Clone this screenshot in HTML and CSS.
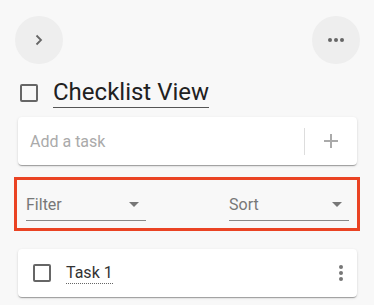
FILE: index.html
```html
<!DOCTYPE html>
<html lang="en">
<head>
<meta charset="utf-8">
<title>Checklist View</title>
<link rel="stylesheet" href="styles.css">
</head>
<body>
<div class="page">
  <div class="topbar">
    <button class="circle-btn" aria-label="Expand">
      <svg width="10" height="12" viewBox="0 0 10 12"><path d="M2.5 1.5 L7 6 L2.5 10.5" fill="none" stroke="#666" stroke-width="1.8"/></svg>
    </button>
    <button class="circle-btn" aria-label="More">
      <svg width="18" height="6" viewBox="0 0 18 6"><circle cx="3" cy="3" r="2" fill="#666"/><circle cx="9" cy="3" r="2" fill="#666"/><circle cx="15" cy="3" r="2" fill="#666"/></svg>
    </button>
  </div>

  <div class="title-row">
    <span class="checkbox"></span>
    <span class="title">Checklist View</span>
  </div>

  <div class="card add-card">
    <div class="add-input">Add a task</div>
    <div class="add-divider"></div>
    <div class="add-btn">
      <svg width="16" height="16" viewBox="0 0 16 16"><path d="M8 1 V15 M1 8 H15" stroke="#aaa" stroke-width="2" fill="none"/></svg>
    </div>
  </div>

  <div class="filter-box">
    <div class="select">
      <span>Filter</span>
      <span class="arrow"></span>
    </div>
    <div class="select">
      <span>Sort</span>
      <span class="arrow"></span>
    </div>
  </div>

  <div class="card task-card">
    <span class="checkbox"></span>
    <span class="task-text">Task 1</span>
    <span class="kebab">
      <svg width="4" height="16" viewBox="0 0 4 16"><circle cx="2" cy="2" r="2" fill="#777"/><circle cx="2" cy="8" r="2" fill="#777"/><circle cx="2" cy="14" r="2" fill="#777"/></svg>
    </span>
  </div>
</div>
</body>
</html>
```

FILE: styles.css
```css
html, body {
  margin: 0;
  padding: 0;
  background: #f8f8f8;
  font-family: Roboto, "Liberation Sans", sans-serif;
}

.page {
  padding: 16px 17px 8px 18px;
}

.topbar {
  display: flex;
  justify-content: space-between;
  margin: 0 -3px;
}

.circle-btn {
  width: 48px;
  height: 48px;
  border-radius: 50%;
  background: #eeeeee;
  border: none;
  padding: 0;
  display: flex;
  align-items: center;
  justify-content: center;
}

.title-row {
  display: flex;
  align-items: center;
  gap: 15px;
  margin-top: 14px;
  padding-left: 2px;
}

.checkbox {
  box-sizing: border-box;
  width: 18px;
  height: 18px;
  border: 2px solid #666;
  border-radius: 2px;
  flex: none;
}

.title {
  font-size: 24px;
  line-height: 28px;
  color: #212121;
  padding-bottom: 1px;
  border-bottom: 1px solid #555;
}

.card {
  background: #fff;
  border-radius: 4px;
  box-shadow: 0 2px 1px -1px rgba(0,0,0,0.2), 0 1px 1px 0 rgba(0,0,0,0.14), 0 1px 3px 0 rgba(0,0,0,0.12);
}

.add-card {
  margin-top: 9px;
  height: 48px;
  display: flex;
  align-items: center;
}

.add-input {
  flex: 1;
  padding-left: 12px;
  font-size: 16px;
  color: #aaa;
}

.add-divider {
  width: 1px;
  height: 27px;
  background: #dddddd;
}

.add-btn {
  width: 52px;
  display: flex;
  align-items: center;
  justify-content: center;
}

.filter-box {
  margin: 12px -3px 0 -4px;
  border: 3px solid #ea4323;
  padding: 0 8px 7px 9px;
  display: flex;
  justify-content: space-between;
}

.select {
  width: 120px;
  display: flex;
  justify-content: space-between;
  align-items: center;
  padding-top: 15px;
  padding-bottom: 6px;
  border-bottom: 1px solid #888;
  font-size: 16px;
  line-height: 19px;
  color: #777;
  box-sizing: border-box;
}

.arrow {
  width: 0;
  height: 0;
  border-left: 5px solid transparent;
  border-right: 5px solid transparent;
  border-top: 5px solid #777;
  margin-right: 7px;
}

.task-card {
  margin-top: 18px;
  height: 48px;
  display: flex;
  align-items: center;
  padding: 0 14px 0 15px;
}

.task-text {
  margin-left: 15px;
  font-size: 16px;
  line-height: 19px;
  color: #333;
  padding-bottom: 1px;
  border-bottom: 1px dotted #666;
}

.kebab {
  margin-left: auto;
  display: flex;
}
```
